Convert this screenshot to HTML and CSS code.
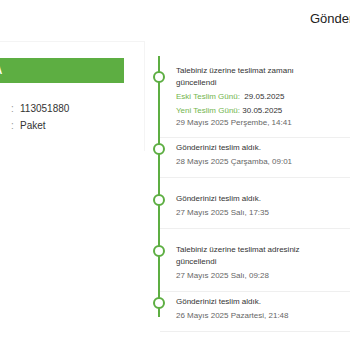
FILE: index.html
```html
<!DOCTYPE html>
<html lang="tr">

<head>
    <meta charset="UTF-8">
    <meta name="viewport" content="width=device-width, initial-scale=1.0">
    <title>Gönderi Takibi</title>
    <link rel="stylesheet" href="styles.css">
</head>

<body>
    <header class="topbar">
        <h1 class="page-title">Gönderi Takibi</h1>
    </header>

    <main class="page">
        <aside class="info-panel">
            <div class="info-bar"><span class="info-bar-text">A</span></div>
            <dl class="info-rows">
                <div class="info-row"><dt class="info-sep">:</dt><dd>113051880</dd></div>
                <div class="info-row"><dt class="info-sep">:</dt><dd>Paket</dd></div>
            </dl>
        </aside>

        <section class="timeline">
            <div class="timeline-item is-first">
                <span class="marker"></span>
                <p class="item-title">Talebiniz üzerine teslimat zamanı<br>güncellendi</p>
                <p class="item-change"><span class="label">Eski Teslim Günü:</span> &nbsp;29.05.2025</p>
                <p class="item-change"><span class="label">Yeni Teslim Günü:</span> 30.05.2025</p>
                <p class="item-date is-tight">29 Mayıs 2025 Perşembe, 14:41</p>
            </div>
            <div class="timeline-item">
                <span class="marker"></span>
                <p class="item-title">Gönderinizi teslim aldık.</p>
                <p class="item-date">28 Mayıs 2025 Çarşamba, 09:01</p>
            </div>
            <div class="timeline-item is-spaced">
                <span class="marker"></span>
                <p class="item-title">Gönderinizi teslim aldık.</p>
                <p class="item-date">27 Mayıs 2025 Salı, 17:35</p>
            </div>
            <div class="timeline-item is-spaced">
                <span class="marker"></span>
                <p class="item-title">Talebiniz üzerine teslimat adresiniz<br>güncellendi</p>
                <p class="item-date">27 Mayıs 2025 Salı, 09:28</p>
            </div>
            <div class="timeline-item">
                <span class="marker"></span>
                <p class="item-title">Gönderinizi teslim aldık.</p>
                <p class="item-date">26 Mayıs 2025 Pazartesi, 21:48</p>
            </div>
        </section>
    </main>
</body>

</html>
```

FILE: styles.css
```css
* {
    margin: 0;
    padding: 0;
    box-sizing: border-box
}

:root {
    --green: #5dae42;
    --label-green: #72b54e;
    --border-color: #efefef;
    --panel-border: #f4f4f4;
    --text-color: #333;
    --muted: #666
}

body {
    overflow: hidden;
    background: #fff;
    color: var(--text-color);
    font-family: "Liberation Sans", Arial, sans-serif
}

.topbar {
    height: 41px;
    padding: 11px 0 0 310px;
    white-space: nowrap
}

.page-title {
    font-size: 13px;
    font-weight: normal;
    color: #222;
    line-height: 15px
}

.page {
    display: flex;
    align-items: flex-start
}

/* left info card */
.info-panel {
    width: 145px;
    height: 110px;
    flex: none;
    border-top: 1px solid var(--panel-border);
    border-right: 1px solid var(--panel-border);
    padding-top: 16px
}

.info-bar {
    width: 124px;
    height: 25px;
    background: var(--green);
    color: #fff;
    font-size: 10px;
    font-weight: bold;
    line-height: 25px;
    overflow: hidden
}

.info-bar-text {
    margin-left: -5px
}

.info-rows {
    margin-top: 17px;
    padding-left: 11px;
    font-size: 10px
}

.info-row {
    display: flex;
    line-height: 17px
}

.info-sep {
    width: 9px;
    color: #999
}

/* timeline */
.timeline {
    position: relative;
    flex: 1;
    padding-top: 15px
}

.timeline::before {
    content: "";
    position: absolute;
    left: 13px;
    top: 15px;
    bottom: 15px;
    width: 2px;
    background: var(--green)
}

.timeline-item {
    position: relative;
    margin-left: 15px;
    padding: 4px 0 9px 16px;
    border-bottom: 1px solid var(--border-color);
    font-size: 8px;
    line-height: 12px
}

.timeline-item.is-first {
    padding-top: 9px;
    padding-bottom: 8px
}

.timeline-item.is-spaced {
    padding-top: 15px
}

.marker {
    position: absolute;
    left: -7px;
    top: 5px;
    width: 12px;
    height: 12px;
    border: 2px solid var(--green);
    border-radius: 50%;
    background: #fff
}

.is-first .marker {
    top: 15px
}

.is-spaced .marker {
    top: 16px
}

.item-title {
    color: var(--text-color)
}

.item-change {
    margin-top: 2px;
    color: var(--text-color)
}

.label {
    color: var(--label-green)
}

.item-date {
    margin-top: 2px;
    color: var(--muted)
}

.item-date.is-tight {
    margin-top: 0
}
```
